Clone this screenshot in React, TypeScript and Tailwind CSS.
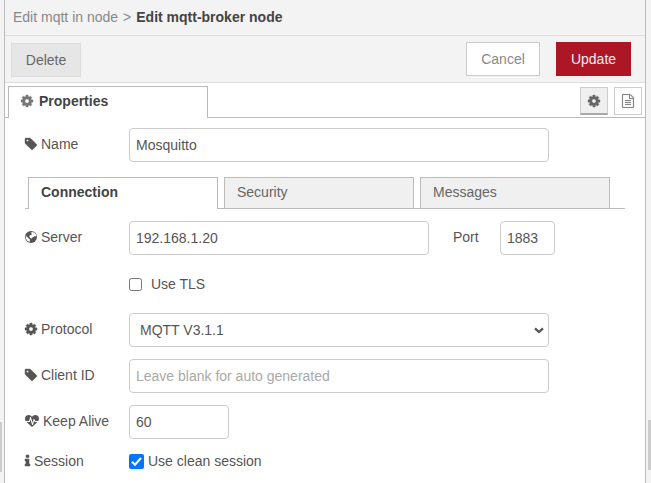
import React from 'react';

type GlyphProps = { d: string; box: string; className: string; weight?: number };

function Glyph({ d, box, className, weight = 0 }: GlyphProps) {
  return (
    <svg viewBox={box} className={`block shrink-0 overflow-visible ${className}`} fill="currentColor" stroke="currentColor" strokeWidth={weight} aria-hidden="true">
      <path d={d} />
    </svg>
  );
}

const COG =
  'M1152 896q0-106-75-181t-181-75-181 75-75 181 75 181 181 75 181-75 75-181zm512-109v222q0 12-8 23t-20 13l-185 28q-19 54-39 91 35 50 107 138 10 12 10 25t-9 23q-27 37-99 108t-94 71q-12 0-26-9l-138-108q-44 23-91 38-16 136-29 186-7 28-36 28h-222q-14 0-24.5-8.5t-11.5-21.5l-28-184q-49-16-90-37l-141 107q-10 9-25 9-14 0-25-11-126-114-165-168-7-10-7-23 0-12 8-23 15-21 51-66.5t54-70.5q-27-50-41-99l-183-27q-13-2-21-12.5t-8-23.5v-222q0-12 8-23t19-13l186-28q14-46 39-92-40-57-107-138-10-12-10-24 0-10 9-23 26-36 98.5-107.5t94.5-71.5q13 0 26 10l138 107q44-23 91-38 16-136 29-186 7-28 36-28h222q14 0 24.5 8.5t11.5 21.5l28 184q49 16 90 37l142-107q9-9 24-9 13 0 25 10 129 119 165 170 7 8 7 22 0 12-8 23-15 21-51 66.5t-54 70.5q26 50 41 98l183 28q13 2 21 12.5t8 23.5z';
const TAG =
  'M576 448q0-53-37.5-90.5t-90.5-37.5-90.5 37.5-37.5 90.5 37.5 90.5 90.5 37.5 90.5-37.5 37.5-90.5zm1067 576q0 53-37 90l-491 492q-39 37-91 37-53 0-90-37l-715-716q-38-37-64.5-101t-26.5-117v-416q0-52 38-90t90-38h416q53 0 117 26.5t102 64.5l715 714q37 39 37 91z';
const DOC =
  'M1596 380q28 28 48 76t20 88v1152q0 40-28 68t-68 28h-1344q-40 0-68-28t-28-68v-1600q0-40 28-68t68-28h896q40 0 88 20t76 48zm-444-244v376h376q-10-29-22-41l-313-313q-12-12-41-22zm384 1528v-1024h-416q-40 0-68-28t-28-68v-416h-768v1536h1280zm-1024-864q0-14 9-23t23-9h704q14 0 23 9t9 23v64q0 14-9 23t-23 9h-704q-14 0-23-9t-9-23v-64zm736 224q14 0 23 9t9 23v64q0 14-9 23t-23 9h-704q-14 0-23-9t-9-23v-64q0-14 9-23t23-9h704zm0 256q14 0 23 9t9 23v64q0 14-9 23t-23 9h-704q-14 0-23-9t-9-23v-64q0-14 9-23t23-9h704z';
const HEART =
  'M1280 1024h305q-5 6-10 10.5t-9 7.5l-3 4-623 600q-18 18-44 18t-44-18l-624-602q-5-2-21-20h369q22 0 39.5-13.5t22.5-34.5l70-281 190 667q6 20 23 33t39 13q21 0 38-13t23-33l146-485 56 112q18 35 57 35zm512-428q0 145-103 300h-369l-111-221q-8-17-25.5-27t-36.5-8q-45 5-56 46l-129 430-196-686q-6-20-23.5-33t-39.5-13-39 13.5-22 34.5l-116 464h-423q-103-155-103-300 0-220 127-344t351-124q62 0 126.5 21.5t120 58 95.5 68.5 76 68q36-36 76-68t95.5-68.5 120-58 126.5-21.5q224 0 351 124t127 344z';
const INFO =
  'M1216 1344v128q0 26-19 45t-45 19h-512q-26 0-45-19t-19-45v-128q0-26 19-45t45-19h64v-384h-64q-26 0-45-19t-19-45v-128q0-26 19-45t45-19h384q26 0 45 19t19 45v576h64q26 0 45 19t19 45zm-128-1152v192q0 26-19 45t-45 19h-256q-26 0-45-19t-19-45v-192q0-26 19-45t45-19h256q26 0 45 19t19 45z';

const CogIcon = () => <Glyph d={COG} box="128 128 1536 1536" className="size-3" weight={50} />;
const TagIcon = () => <Glyph d={TAG} box="128 128 1536 1536" className="size-3" weight={50} />;
const DocIcon = () => <Glyph d={DOC} box="128 0 1536 1792" className="h-3.5 w-3" weight={20} />;
const HeartIcon = () => <Glyph d={HEART} box="0 0 1792 1792" className="size-3.5" />;
const InfoIcon = () => <Glyph d={INFO} box="576 0 640 1792" className="h-3.5 w-[5px]" weight={70} />;

function GlobeIcon() {
  return (
    <svg viewBox="0 0 12 12" className="block size-3 shrink-0" aria-hidden="true">
      <circle cx="6" cy="6" r="6" fill="currentColor" />
      <path d="M6.8.9 9 1.4 10.8 3 11.4 5 10.4 5.6 9.6 5 8.6 6.2 7.8 6 6.8 7.6 5.2 7 4.2 5.2 5.2 4 6.6 3.8 7 3 6 2Z" fill="white" />
      <path d="M.8 4.8 2 5.8 3.4 7.2 4.9 8.2 4.9 9.6 4.4 10.9 2.2 9.8.9 7.6Z" fill="white" />
    </svg>
  );
}

function Row({ icon, label, className, children }: { icon?: React.ReactNode; label?: string; className: string; children: React.ReactNode }) {
  return (
    <div className={`flex ${className}`}>
      <div className="flex h-8 w-[104px] shrink-0 items-center gap-1 whitespace-nowrap">
        {icon}
        {label && <span>{label}</span>}
      </div>
      {children}
    </div>
  );
}

const field = 'block h-[34px] rounded-[4px] border border-[#ccc] bg-white px-1.5 pb-px text-sm text-[#555] outline-none placeholder:text-[#a9a9a9]';

export default function App() {
  return (
    <div className="flex h-[483px] w-[651px] overflow-hidden bg-[#f3f3f3] font-['Liberation_Sans',Arial,sans-serif] text-sm leading-5 text-[#555]">
      <div className="flex w-1 shrink-0 flex-col pt-[422px]">
        <div className="h-[50px] w-0.5 bg-[#ccc]" />
      </div>
      <main className="flex w-[642px] shrink-0 flex-col border-x border-[#bbb] bg-white">
        <header className="flex h-9 items-center border-b border-[#ddd] bg-[#f3f3f3] pb-0.5 pl-2">
          <span className="text-[#888]">Edit mqtt in node</span>
          <span className="mx-[5px] text-[#888]">&gt;</span>
          <span className="font-bold text-[#444]">Edit mqtt-broker node</span>
        </header>
        <div className="flex h-[47px] items-start border-b border-[#ddd] bg-[#f3f3f3] pt-1.5 pr-3.5 pl-1.5">
          <button className="mt-px h-[34px] w-[70px] border border-[#ddd] bg-[#e6e6e6] text-[#666]">Delete</button>
          <button className="ml-auto h-[34px] w-[74px] border border-[#ccc] bg-white text-[#888]">Cancel</button>
          <button className="ml-4 h-[34px] w-[75px] bg-[#ad1625] text-[#eee]">Update</button>
        </div>
        <div className="flex h-[35px] shrink-0 items-end pt-[3px]">
          <div className="h-full w-[3px] border-b border-[#bbb]" />
          <div className="flex h-full w-[200px] items-center gap-1.5 border-x border-t border-[#bbb] pb-[3px] pl-3 text-[#777]">
            <CogIcon />
            <span className="font-bold text-[#444]">Properties</span>
          </div>
          <div className="flex h-full flex-1 items-start justify-end gap-1.5 border-b border-[#bbb] pt-px pr-[3px]">
            <button className="flex h-7 w-7 items-center justify-center border border-b-2 border-[#ccc] border-b-[#aaa] bg-[#efefef] text-[#666]"><CogIcon /></button>
            <button className="flex h-7 w-7 items-center justify-center border border-[#ccc] bg-white text-[#888]"><DocIcon /></button>
          </div>
        </div>
        <form className="flex flex-col pl-5">
          <Row icon={<TagIcon />} label="Name" className="mt-2.5">
            <input className={`${field} w-[420px]`} defaultValue="Mosquitto" />
          </Row>
          <div className="mt-[15px] flex h-8 w-[600px]">
            <div className="w-[3px] border-b border-[#bbb]" />
            <div className="w-[190px] border-x border-t border-[#bbb] pt-1 pl-3 font-bold text-[#444]">Connection</div>
            <div className="w-1.5 border-b border-[#bbb]" />
            <div className="w-[190px] border border-[#bbb] bg-[#f0f0f0] pt-1 pl-3 text-[#666]">Security</div>
            <div className="w-1.5 border-b border-[#bbb]" />
            <div className="w-[190px] border border-[#bbb] bg-[#f0f0f0] pt-1 pl-3 text-[#666]">Messages</div>
            <div className="flex-1 border-b border-[#bbb]" />
          </div>
          <Row icon={<GlobeIcon />} label="Server" className="mt-3">
            <input className={`${field} w-[300px]`} defaultValue="192.168.1.20" />
            <span className="ml-6 w-[47px] pt-1.5">Port</span>
            <input className={`${field} w-[55px]`} defaultValue="1883" />
          </Row>
          <div className="mt-[19px] ml-[104px] flex h-5 items-center">
            <span className="size-[13px] rounded-[2.5px] border border-[#767676] bg-white" />
            <span className="ml-[9px]">Use TLS</span>
          </div>
          <Row icon={<CogIcon />} label="Protocol" className="mt-[19px]">
            <div className="flex h-[34px] w-[420px] items-center justify-between rounded-[4px] border border-[#ccc] bg-white pr-1 pl-2.5">
              <span>MQTT V3.1.1</span>
              <svg viewBox="0 0 10 7" className="block h-[7px] w-2.5" fill="none" stroke="currentColor" strokeWidth="2.3"><path d="M1 1.3 5 5 9 1.3" /></svg>
            </div>
          </Row>
          <Row icon={<TagIcon />} label="Client ID" className="mt-3">
            <input className={`${field} w-[420px]`} placeholder="Leave blank for auto generated" />
          </Row>
          <Row icon={<HeartIcon />} label="Keep Alive" className="mt-3">
            <input className={`${field} w-[100px]`} defaultValue="60" />
          </Row>
          <Row icon={<InfoIcon />} label="Session" className="mt-[6px]">
            <div className="flex h-8 items-center">
              <svg viewBox="0 0 15 15" className="block size-[15px]"><rect width="15" height="15" rx="2" fill="#0075ff" /><path d="m3 7.8 3 3 6-6.8" fill="none" stroke="white" strokeWidth="2.1" /></svg>
              <span className="ml-1">Use clean session</span>
            </div>
          </Row>
        </form>
      </main>
      <div className="flex flex-1 flex-col items-end pt-[420px]">
        <div className="h-[50px] w-[3px] bg-[#ccc]" />
      </div>
    </div>
  );
}
